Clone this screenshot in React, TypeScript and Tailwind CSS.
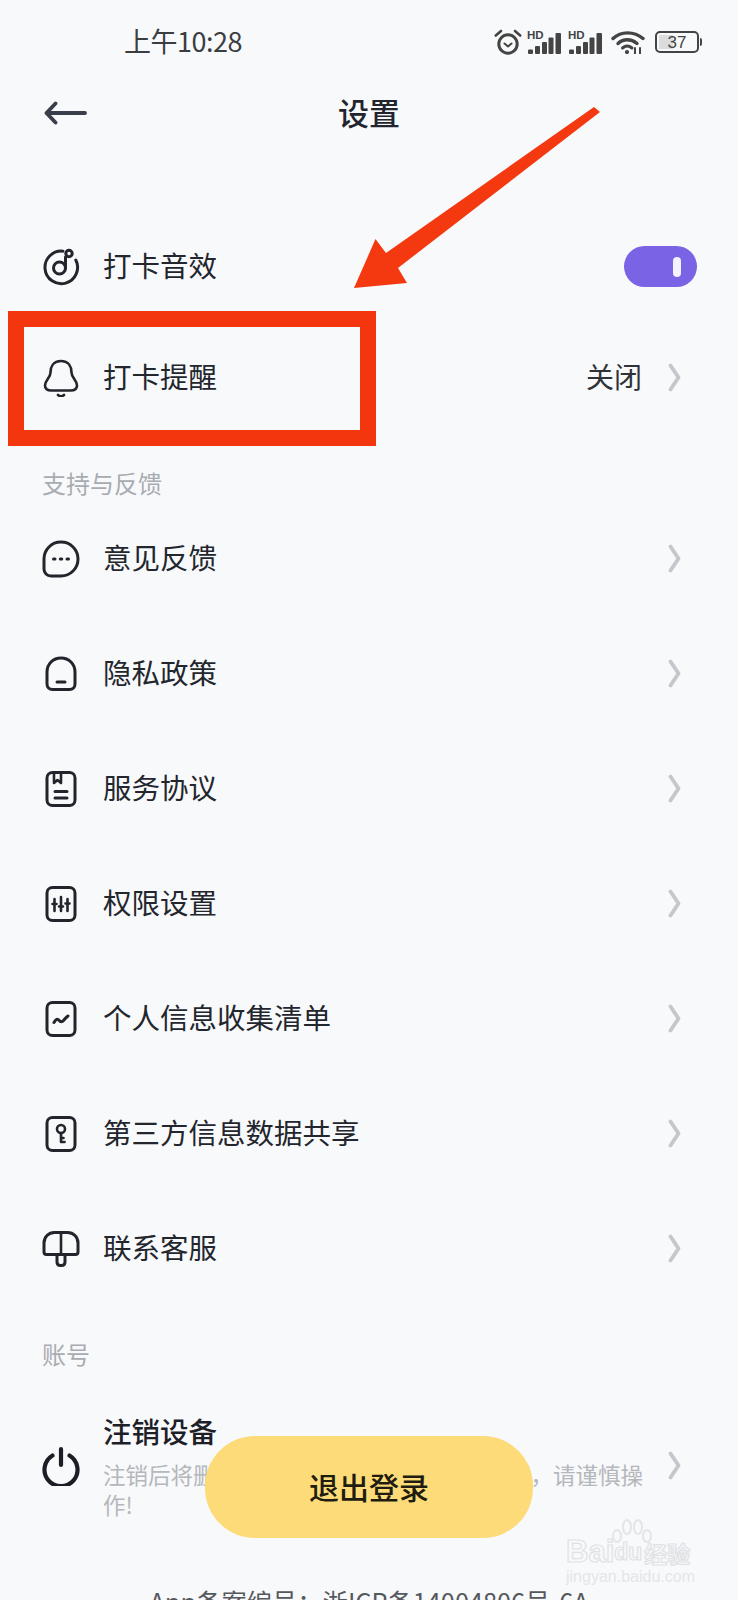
import React from "react";

const S = { fill: "none", stroke: "#22252b", strokeWidth: 3, strokeLinecap: "round" as const, strokeLinejoin: "round" as const };

function Ico({ children }: { children: React.ReactNode }) {
  return (
    <svg width="38" height="38" viewBox="0 0 38 38" className="shrink-0" {...S}>
      {children}
    </svg>
  );
}

const icons: Record<string, React.ReactNode> = {
  music: (
    <Ico>
      <path d="M21 3.200A16.300 16.300 0 1 0 33.800 12" />
      <circle cx="17.500" cy="20" r="6" />
      <path d="M23.500 20V9" />
      <circle cx="27" cy="5.500" r="3.200" />
    </Ico>
  ),
  bell: (
    <Ico>
      <path d="M19 2C11.500 2 8.500 7.500 8.500 13.500c0 5.500-5.500 7.500-5.500 13 0 3.500 3 5 6.500 5h19c3.500 0 6.500-1.500 6.500-5 0-5.500-5.500-7.500-5.500-13C29.500 7.500 26.500 2 19 2Z" strokeWidth="2.600" />
      <path d="M16 36c1.600 1.600 4.400 1.600 6 0" strokeWidth="2.600" />
    </Ico>
  ),
  chat: (
    <Ico>
      <path d="M19 2C9.500 2 2 9.500 2 19v10c0 4 3 7 7 7h10c9.500 0 17-7.500 17-17S28.500 2 19 2Z" />
      <path d="M11.500 19h1.500M18.300 19h1.500M25 19h1.500" />
    </Ico>
  ),
  privacy: (
    <Ico>
      <path d="M19 3C11 3 5 9 5 17v12c0 3.300 2.200 5.500 5.500 5.500h17c3.300 0 5.500-2.200 5.500-5.500V17C33 9 27 3 19 3Z" />
      <path d="M15 27h8" />
    </Ico>
  ),
  doc: (
    <Ico>
      <rect x="5" y="2.500" width="28" height="33" rx="5.500" />
      <path d="M12 3v10l3.500-3 3.500 3V3" strokeWidth="2.600" />
      <path d="M13 21.500h12M13 28h12" />
    </Ico>
  ),
  sliders: (
    <Ico>
      <rect x="5" y="2.500" width="28" height="33" rx="5.500" />
      <path d="M12.500 14v12M19 12v14M25.500 14v12" strokeWidth="2.600" />
      <path d="M10.500 19h4M17 21.500h4M23.500 18.500h4" strokeWidth="2.600" />
    </Ico>
  ),
  chart: (
    <Ico>
      <rect x="5" y="2.500" width="28" height="33" rx="5.500" />
      <path d="M12 22.500c2-3.500 3.500-4 5-2.200s3 2 4.500.2c1.200-1.600 2.500-3 4.500-4.500" />
    </Ico>
  ),
  key: (
    <Ico>
      <rect x="5" y="2.500" width="28" height="33" rx="5.500" />
      <circle cx="19" cy="14" r="4" strokeWidth="2.600" />
      <path d="M19 18v9h3.500M19 23h2.500" strokeWidth="2.600" />
    </Ico>
  ),
  mushroom: (
    <Ico>
      <path d="M2 22V13C2 7 6.500 2.500 12.500 2.500h13C31.500 2.500 36 7 36 13v9c0 1.500-1 2.500-2.500 2.500h-29C3 24.500 2 23.500 2 22Z" />
      <path d="M19 3v21" strokeWidth="2.600" />
      <path d="M15 24.500V32c0 2.200 1.300 3.500 3.500 3.500h1c2.200 0 3.500-1.300 3.500-3.500v-7.500" />
    </Ico>
  ),
  power: (
    <svg width="38" height="40" viewBox="0 0 38 40" className="shrink-0" fill="none" stroke="#1b1e24" strokeWidth="4.200" strokeLinecap="round">
      <path d="M19 3v16" />
      <path d="M10.500 9.500a16.500 16.500 0 1 0 17 0" />
    </svg>
  ),
};

function Chevron() {
  return (
    <svg width="13" height="29" viewBox="0 0 13 29" className="shrink-0" fill="none" stroke="#c5c7cc" strokeWidth="3.800" strokeLinecap="round" strokeLinejoin="round">
      <path d="M2.500 2.500 10.500 14.500 2.500 26.500" />
    </svg>
  );
}

function Row({ icon, label, h = "h-[115px]", right }: { icon: string; label: string; h?: string; right?: React.ReactNode }) {
  return (
    <div className={`flex items-center pl-[42px] pr-[57px] ${h}`}>
      <div className="w-[61px] shrink-0">{icons[icon]}</div>
      <div className="flex-1 pb-[3px] text-[28.500px] leading-[38px] text-[#23262d]">{label}</div>
      {right ?? <Chevron />}
    </div>
  );
}

function Signal() {
  return (
    <svg width="35" height="24" viewBox="0 0 35 24" className="shrink-0">
      <text x="0" y="9" fontSize="11.500" fontWeight="700" fill="#444" fontFamily="Liberation Sans, sans-serif">HD</text>
      <rect x="1" y="19.500" width="5" height="4.500" rx="1" fill="#444" />
      <rect x="8" y="16" width="5" height="8" rx="1" fill="#444" />
      <rect x="15" y="12" width="5" height="12" rx="1" fill="#444" />
      <rect x="21.500" y="7.500" width="5" height="16.500" rx="1" fill="#444" />
      <rect x="28.500" y="3" width="5.500" height="21" rx="1" fill="#444" />
    </svg>
  );
}

function StatusIcons() {
  return (
    <div className="flex items-center pr-[36px]">
      <svg width="28" height="26" viewBox="0 0 28 26" className="mr-[5px] shrink-0" fill="none" stroke="#444" strokeLinecap="round" strokeLinejoin="round">
        <circle cx="14" cy="15" r="9.200" strokeWidth="3" />
        <path d="M10.500 14.500 14 17.500l3.500-3" strokeWidth="2" />
        <path d="M1.800 6.500 7 2M26.200 6.500 21 2" strokeWidth="2.600" />
      </svg>
      <Signal />
      <div className="w-[6px]" />
      <Signal />
      <svg width="34" height="24" viewBox="0 0 34 24" className="ml-[8px] shrink-0" fill="none" stroke="#444" strokeLinecap="round">
        <path d="M2 8.500C10 1 23 1 32 8.500" strokeWidth="3.400" />
        <path d="M7 13.500c5.500-5 13-5 19 0" strokeWidth="3.400" />
        <path d="M11.500 18c3-2.500 6.500-2.500 9.500 0" strokeWidth="3" />
        <circle cx="16" cy="22" r="2.100" fill="#444" stroke="none" />
        <path d="M24 18v5.500M29 18v5.500" strokeWidth="2" />
      </svg>
      <div className="relative ml-[10px] flex h-[22px] w-[44px] items-center justify-center rounded-[5px] border-2 border-[#444] text-[17px] leading-none text-[#444]">
        <div className="absolute left-[2px] top-[2px] h-[14px] w-[14px] bg-[#dcdcdc]" />
        <span className="relative [font-family:'Liberation_Sans',sans-serif]">37</span>
      </div>
      <div className="ml-[1px] h-[8px] w-[2px] rounded-r bg-[#444]" />
    </div>
  );
}

export default function App() {
  return (
    <div className="relative h-[1600px] w-[738px] overflow-hidden bg-[#f8f9fb] [font-family:'Noto_Sans_CJK_SC','Noto_Sans',sans-serif]">
      <div className="flex h-[84px] items-center justify-between pl-[124px]">
        <div className="pb-[4px] text-[27px] leading-none tracking-[-0.5px] text-[#3b3d40]">上午10:28</div>
        <StatusIcons />
      </div>

      <div className="mb-[69px] flex h-[58px] items-center px-[44px]">
        <svg width="44" height="24" viewBox="0 0 44 24" className="shrink-0" fill="none" stroke="#3a3d4a" strokeWidth="3.800" strokeLinecap="round" strokeLinejoin="round">
          <path d="M2.500 12H41M11.500 2.500 2.500 12l9 9.500" />
        </svg>
        <div className="flex-1 pb-[4px] pr-[44px] text-center text-[31px] font-medium leading-none text-[#22252d]">设置</div>
      </div>

      <Row
        icon="music"
        label="打卡音效"
        h="h-[111px]"
        right={
          <div className="-mr-[16px] flex h-[41px] w-[73px] items-center justify-end rounded-full bg-[#7b63e6] pr-[16px]">
            <div className="h-[20px] w-[8px] rounded-full bg-[#f4f2fd]" />
          </div>
        }
      />
      <Row
        icon="bell"
        label="打卡提醒"
        h="h-[111px]"
        right={
          <div className="flex items-center gap-[26px]">
            <span className="pb-[3px] text-[28px] leading-[38px] text-[#2f3237]">关闭</span>
            <Chevron />
          </div>
        }
      />

      <div className="flex h-[68px] items-start pl-[42px] pt-[33px] text-[24px] leading-[34px] text-[#a8acb1]">支持与反馈</div>

      <Row icon="chat" label="意见反馈" />
      <Row icon="privacy" label="隐私政策" />
      <Row icon="doc" label="服务协议" />
      <Row icon="sliders" label="权限设置" />
      <Row icon="chart" label="个人信息收集清单" />
      <Row icon="key" label="第三方信息数据共享" />
      <Row icon="mushroom" label="联系客服" />

      <div className="flex h-[106px] items-start pl-[42px] pt-[31px] text-[24px] leading-[34px] text-[#a8acb1]">账号</div>

      <div className="flex items-center pl-[42px] pr-[57px]">
        <div className="w-[61px] shrink-0">{icons.power}</div>
        <div className="w-[543px] shrink-0">
          <div className="text-[28.500px] font-medium leading-[38px] text-[#1d2026]">注销设备</div>
          <div className="mt-[9px] text-[22.500px] leading-[30px] text-[#b4b7bc]">注销后将删除账号内的所有打卡记录和数据，请谨慎操作!</div>
        </div>
        <div className="ml-auto">
          <Chevron />
        </div>
      </div>

      <div className="mt-[66px] text-center text-[25.300px] leading-[32px] text-[#55585d]">App备案编号：浙ICP备14004806号-6A</div>

      {/* floating button */}
      <div className="absolute left-[205px] top-[1436px] flex h-[102px] w-[328px] items-center justify-center rounded-[50px] bg-[#fddb78] pb-[3px] text-[30px] font-medium leading-none text-[#201c10]">
        退出登录
      </div>

      {/* watermark */}
      <div className="absolute left-[566px] top-[1519px] w-[134px]">
        <svg width="42" height="30" viewBox="0 0 42 30" className="absolute left-[45px] top-0" fill="none" stroke="#e3e5e8" strokeWidth="2">
          <ellipse cx="6" cy="17" rx="4" ry="6" />
          <ellipse cx="16" cy="8" rx="4" ry="7" />
          <ellipse cx="27" cy="8" rx="4" ry="7" />
          <ellipse cx="36" cy="17" rx="4" ry="6" />
        </svg>
        <div className="relative mt-[18px] flex items-end text-[31px] font-bold leading-[30px] text-transparent [-webkit-text-stroke:1.200px_#e0e2e5] [font-family:'Liberation_Sans',sans-serif]">
          <span>Bai</span>
          <span className="text-[23px]">du</span>
          <span className="ml-[2px] text-[23px] leading-[28px] [font-family:'Noto_Sans_CJK_SC',sans-serif]">经验</span>
        </div>
        <div className="mt-[1px] whitespace-nowrap text-[16px] leading-[18px] text-[#e4e6e9] [font-family:'Liberation_Sans',sans-serif]">jingyan.baidu.com</div>
      </div>

      {/* annotation: arrow */}
      <svg className="pointer-events-none absolute inset-0" width="738" height="1600" viewBox="0 0 738 1600">
        <polygon points="594,107 600,112 398,268 407,283 354,288 375.500,239 386,253" fill="#f4380f" />
      </svg>

      {/* annotation: red rectangle */}
      <div className="absolute left-[8px] top-[311px] h-[135px] w-[368px] border-[16px] border-[#f4360f]" />
    </div>
  );
}
